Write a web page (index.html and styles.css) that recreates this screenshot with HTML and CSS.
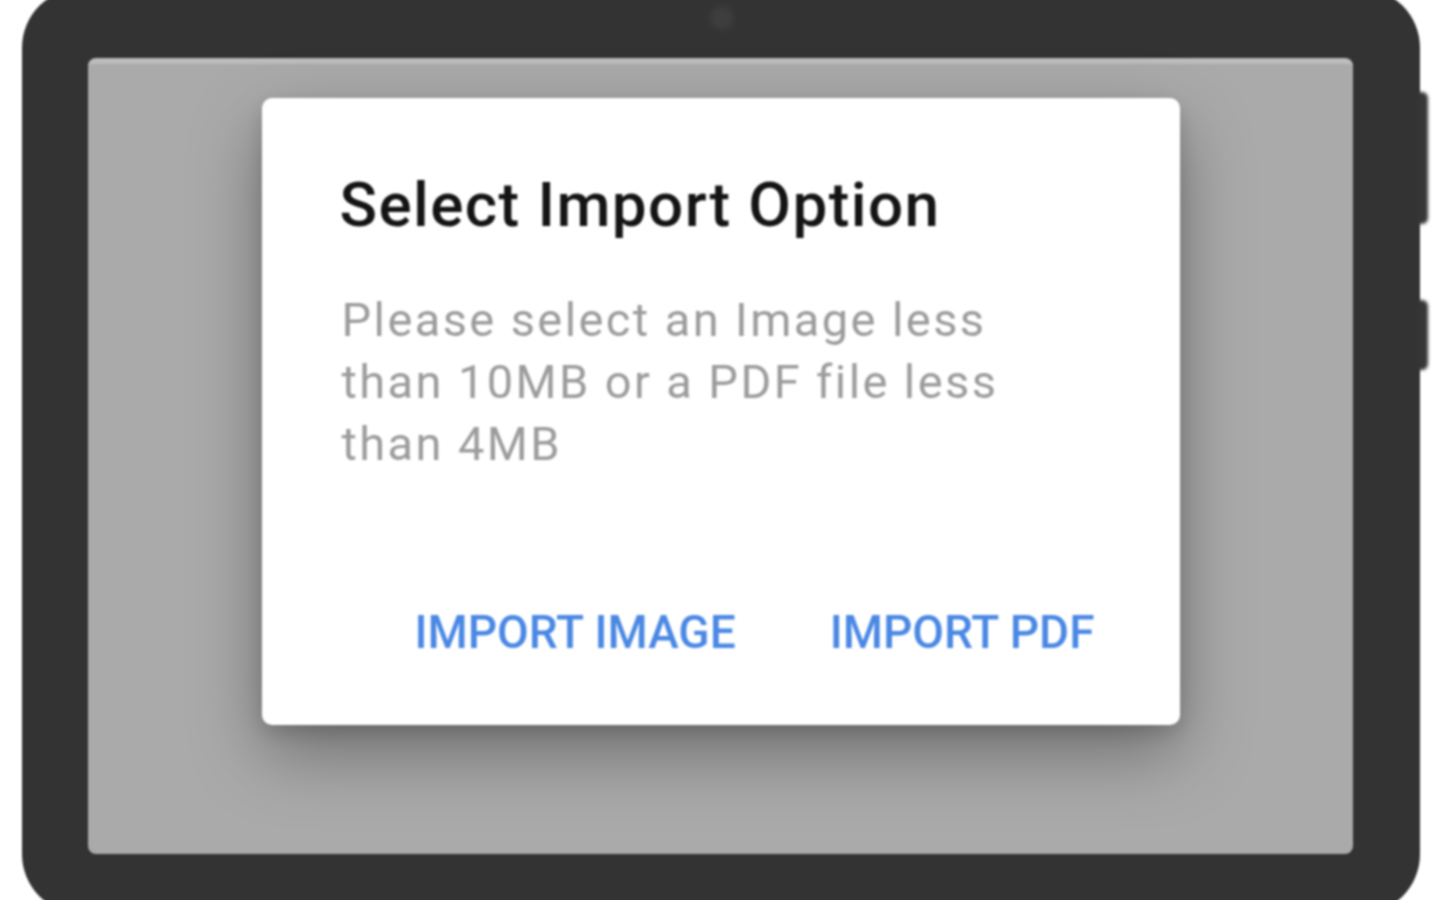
FILE: index.html
```html
<!DOCTYPE html>
<html lang="en">
<head>
<meta charset="utf-8">
<title>Select Import Option</title>
<link rel="stylesheet" href="styles.css">
</head>
<body>
  <div class="device">
    <span class="camera"></span>
    <span class="side-btn side-btn-a"></span>
    <span class="side-btn side-btn-b"></span>
    <div class="screen">
      <div class="dialog">
        <h1 class="dialog-title">Select Import Option</h1>
        <p class="dialog-body">Please select an Image less<br>than 10MB or a PDF file less<br>than 4MB</p>
        <div class="dialog-actions">
          <button class="dialog-btn">IMPORT IMAGE</button>
          <button class="dialog-btn">IMPORT PDF</button>
        </div>
      </div>
    </div>
  </div>
</body>
</html>
```

FILE: styles.css
```css
html, body {
  margin: 0;
  padding: 0;
  background: #ffffff;
  width: 1440px;
  height: 900px;
  overflow: hidden;
  font-family: Roboto, "Noto Sans", "Liberation Sans", sans-serif;
}

body {
  display: flex;
  padding-left: 22px;
  box-sizing: border-box;
}

.device {
  position: relative;
  margin-top: -12px;
  width: 1398px;
  height: 926px;
  box-sizing: border-box;
  padding: 70px 67px 60px 66px;
  background: #333333;
  border-radius: 60px;
  flex-shrink: 0;
  display: flex;
  filter: blur(1.2px);
}

.camera {
  position: absolute;
  left: 688px;
  top: 18px;
  width: 24px;
  height: 24px;
  border-radius: 50%;
  background: #3e3e3e;
  filter: blur(3px);
}

.side-btn {
  position: absolute;
  right: -8px;
  width: 11px;
  background: #363636;
  border-radius: 0 6px 6px 0;
  filter: blur(1.5px);
}

.side-btn-a {
  top: 104px;
  height: 132px;
}

.side-btn-b {
  top: 312px;
  height: 70px;
}

.screen {
  flex: 1;
  background: #aaaaaa;
  border-top: 6px solid #bcbcbc;
  border-radius: 8px;
  display: flex;
  justify-content: center;
  align-items: flex-start;
  padding-top: 34px;
}

.dialog {
  width: 918px;
  height: 627px;
  box-sizing: border-box;
  background: #ffffff;
  border-radius: 10px;
  box-shadow: 0 28px 70px rgba(0, 0, 0, 0.35), 0 8px 20px rgba(0, 0, 0, 0.15);
  padding: 71px 85px 0 78px;
  display: flex;
  flex-direction: column;
  filter: blur(0.3px);
}

.dialog-title {
  margin: 0;
  font-size: 62px;
  line-height: 72px;
  font-weight: 500;
  color: #141414;
  letter-spacing: 1.4px;
}

.dialog-body {
  margin: 48px 0 0 2px;
  font-size: 47px;
  line-height: 62px;
  font-weight: 400;
  color: #9c9c9c;
  letter-spacing: 2.4px;
}

.dialog-actions {
  margin-top: 129px;
  display: flex;
  justify-content: flex-end;
  gap: 94px;
}

.dialog-btn {
  border: 0;
  background: none;
  padding: 0;
  font-family: Roboto, "Noto Sans", "Liberation Sans", sans-serif;
  font-size: 46px;
  line-height: 56px;
  font-weight: 500;
  color: #4a88e4;
  cursor: pointer;
}
```
